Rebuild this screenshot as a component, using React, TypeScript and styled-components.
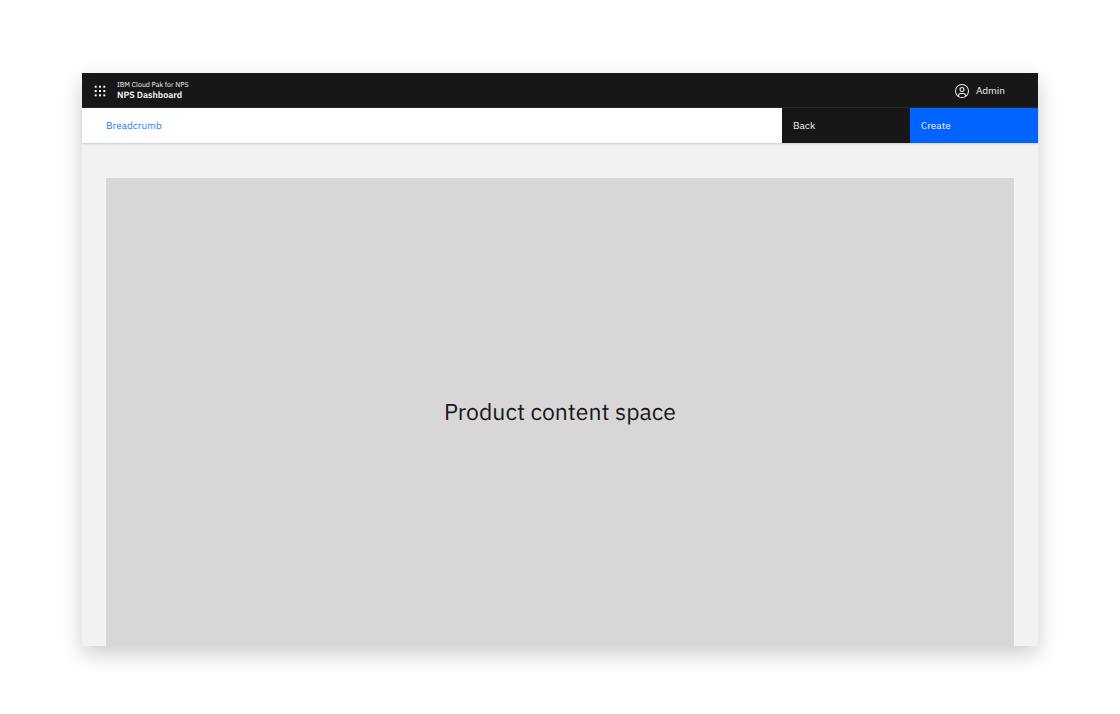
import React from 'react';
import styled, { createGlobalStyle } from 'styled-components';

const GlobalStyle = createGlobalStyle`
  *, *::before, *::after { box-sizing: border-box; }
  body {
    margin: 0;
    background: #ffffff;
    color: #171717;
    font-family: "IBM Plex Sans", Roboto, "Liberation Sans", sans-serif;
    text-rendering: geometricPrecision;
  }
`;

const Page = styled.div`
  display: flex;
  min-height: 100vh;
  padding: 73px 82px 68px;
`;

const Shell = styled.div`
  flex: 1;
  display: flex;
  flex-direction: column;
  background: #f2f2f2;
  box-shadow: 0 8px 20px rgba(0, 0, 0, 0.2);
`;

const Header = styled.header`
  display: flex;
  align-items: center;
  height: 35px;
  padding: 1px 33px 0 10px;
  background: #171717;
  box-shadow: inset 0 -1px 0 #282828;
  color: #f3f3f3;
`;

const IconButton = styled.button`
  display: flex;
  padding: 0;
  border: 0;
  background: none;
  color: inherit;
  cursor: pointer;
`;

const Titles = styled.div`
  flex: 1;
  margin-left: 9px;
  padding-bottom: 2px;
`;

const SuiteName = styled.div`
  font-size: 7px;
  line-height: 11px;
`;

const ProductName = styled.div`
  font-size: 9px;
  line-height: 11px;
  font-weight: 600;
`;

const UserButton = styled(IconButton)`
  align-items: center;
  gap: 6px;
  font: inherit;
  font-size: 10px;
  line-height: 16px;
`;

const ActionBar = styled.div`
  display: flex;
  align-items: stretch;
  height: 35px;
  background: #ffffff;
  box-shadow: 0 1px 2px rgba(0, 0, 0, 0.16);
`;

const Breadcrumbs = styled.nav`
  flex: 1;
  display: flex;
  align-items: center;
  padding-left: 24px;
`;

const BreadcrumbLink = styled.a`
  color: #2a7bff;
  font-size: 10px;
  line-height: 16px;
  text-decoration: none;
`;

const ActionButton = styled.button<{ $primary?: boolean }>`
  width: 128px;
  padding: 0 11px;
  border: 0;
  background: ${({ $primary }) => ($primary ? '#0062ff' : '#171717')};
  color: #f3f3f3;
  font: inherit;
  font-size: 10px;
  line-height: 16px;
  text-align: left;
  cursor: pointer;
`;

const Main = styled.main`
  flex: 1;
  display: flex;
  padding: 35px 24px 0;
`;

const ContentSpace = styled.section`
  flex: 1;
  display: flex;
  align-items: center;
  justify-content: center;
  background: #d8d6d7;
`;

const ContentTitle = styled.h1`
  margin: 0;
  font-size: 23px;
  line-height: 32px;
  font-weight: 400;
`;

const dotPositions = [2.7, 7, 11.3];

function SwitcherIcon() {
  return (
    <svg width="16" height="16" viewBox="0 0 16 16" fill="currentColor" aria-hidden="true">
      {dotPositions.map((y) =>
        dotPositions.map((x) => <rect key={`${x}-${y}`} x={x} y={y} width="2" height="2" />),
      )}
    </svg>
  );
}

function AvatarIcon() {
  return (
    <svg width="16" height="16" viewBox="0 0 32 32" fill="currentColor" aria-hidden="true">
      <path d="M16,8a5,5,0,1,0,5,5A5,5,0,0,0,16,8Zm0,8a3,3,0,1,1,3-3A3.0034,3.0034,0,0,1,16,16Z" />
      <path d="M16,2A14,14,0,1,0,30,16,14.0158,14.0158,0,0,0,16,2ZM10,26.3765V25a3.0033,3.0033,0,0,1,3-3h6a3.0033,3.0033,0,0,1,3,3v1.3765a11.8989,11.8989,0,0,1-12,0Zm13.9925-1.4507A5.0016,5.0016,0,0,0,19,20H13a5.0016,5.0016,0,0,0-4.9925,4.9258,12,12,0,1,1,15.985,0Z" />
    </svg>
  );
}

export default function App() {
  return (
    <>
      <GlobalStyle />
      <Page>
        <Shell>
          <Header>
            <IconButton type="button" aria-label="Switch application">
              <SwitcherIcon />
            </IconButton>
            <Titles>
              <SuiteName>IBM Cloud Pak for NPS</SuiteName>
              <ProductName>NPS Dashboard</ProductName>
            </Titles>
            <UserButton type="button">
              <AvatarIcon />
              Admin
            </UserButton>
          </Header>
          <ActionBar>
            <Breadcrumbs aria-label="Breadcrumb">
              <BreadcrumbLink href="#">Breadcrumb</BreadcrumbLink>
            </Breadcrumbs>
            <ActionButton type="button">Back</ActionButton>
            <ActionButton type="button" $primary>
              Create
            </ActionButton>
          </ActionBar>
          <Main>
            <ContentSpace>
              <ContentTitle>Product content space</ContentTitle>
            </ContentSpace>
          </Main>
        </Shell>
      </Page>
    </>
  );
}
